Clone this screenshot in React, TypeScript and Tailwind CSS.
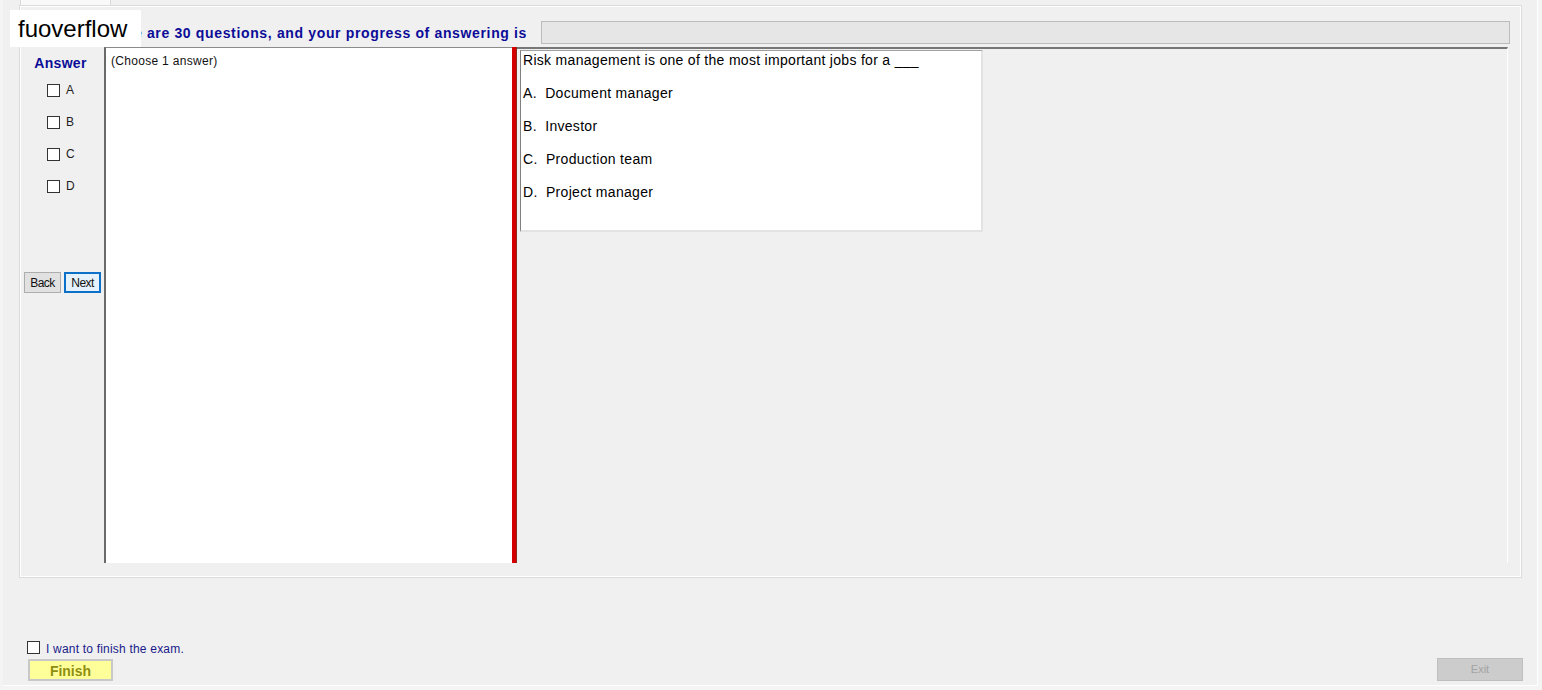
import { ReactNode } from 'react'

const font = { fontFamily: '"Liberation Sans", Arial, sans-serif' }

function Box({ label, top }: { label: string; top: string }) {
  return (
    <div className={`flex items-center ${top}`}>
      <span className="ml-[23px] h-[13px] w-[13px] border border-[#333] bg-white" />
      <span className="ml-[6px] text-[12px] leading-[14px] text-[#222]">{label}</span>
    </div>
  )
}

function Line({ children, first }: { children: ReactNode; first?: boolean }) {
  return (
    <div className={`whitespace-pre pl-[2px] text-[14px] leading-[17px] tracking-[0.3px] text-black ${first ? '' : 'mt-[16px]'}`}>
      {children}
    </div>
  )
}

export default function App() {
  return (
    <div style={font} className="relative h-[690px] w-[1542px] overflow-hidden bg-[#f4f4f4]">
      {/* watermark */}
      <div className="absolute left-[10px] top-[10px] flex h-[37px] w-[131px] items-center bg-white pl-[8px] text-[24px] text-black">
        fuoverflow
      </div>

      <div className="ml-[3px] flex h-[686px] w-[1535px] flex-col border-b border-r border-white bg-[#f0f0f0]">
        {/* tab strip */}
        <div className="flex h-[5px]">
          <div className="ml-[17px] h-[5px] w-[91px] border-x border-[#d9d9d9] bg-[#f9f9f9]" />
        </div>

        {/* tab page */}
        <div className="ml-[16px] flex h-[573px] w-[1503px] flex-col border border-[#dcdcdc] bg-[#f0f0f0] shadow-[inset_1px_1px_0_#ffffff,inset_-1px_-1px_0_#ffffff]">
          {/* header */}
          <div className="flex h-[41px] items-center">
            <div className="ml-[81px] w-[440px] whitespace-nowrap pt-[12px] text-[14px] font-bold leading-[16px] tracking-[0.65px] text-[#0c0c98]">
              There are 30 questions, and your progress of answering is
            </div>
            <div className="mt-[12px] h-[23px] w-[969px] border border-[#bcbcbc] bg-[#e6e6e6]" />
          </div>

          {/* content */}
          <div className="ml-[4px] flex h-[516px] w-[1485px]">
            {/* answer column */}
            <div className="flex w-[80px] flex-col">
              <div className="mt-[8px] pr-[7px] text-center text-[14px] font-bold leading-[16px] tracking-[0.3px] text-[#0c0c98]">Answer</div>
              <Box label="A" top="mt-[12px]" />
              <Box label="B" top="mt-[18px]" />
              <Box label="C" top="mt-[18px]" />
              <Box label="D" top="mt-[18px]" />
              <div className="mt-[79px] flex gap-[3px]">
                <button className="h-[21px] w-[37px] border border-[#adadad] bg-[#e1e1e1] text-[12px] tracking-[-0.6px] text-[#111]">
                  Back
                </button>
                <button className="h-[21px] w-[37px] border-2 border-[#0a70c8] bg-[#e5f1fb] text-[12px] tracking-[-0.6px] text-[#111]">
                  Next
                </button>
              </div>
            </div>

            {/* choose panel */}
            <div className="w-[408px] border-l-2 border-t border-l-[#6a6a6a] border-t-[#8a8a8a] bg-white">
              <div className="pl-[5px] pt-[6px] text-[12px] leading-[14px] tracking-[0.3px] text-[#111]">(Choose 1 answer)</div>
            </div>

            {/* splitter */}
            <div className="w-[5px] bg-[#d40000] shadow-[inset_-1px_0_0_#8a2a1a]" />

            {/* question panel */}
            <div className="w-[991px] border-r border-t-2 border-r-[#ffffff] border-t-[#777777] bg-[#f0f0f0]">
              <div className="ml-[3px] mt-[1px] h-[182px] w-[463px] border-l border-t border-b-2 border-r-2 border-l-[#808080] border-t-[#a0a0a0] border-b-[#e3e3e3] border-r-[#e3e3e3] bg-white pt-[1px]">
                <Line first>Risk management is one of the most important jobs for a ___</Line>
                <Line>A.  Document manager</Line>
                <Line>B.  Investor</Line>
                <Line>C.  Production team</Line>
                <Line>D.  Project manager</Line>
              </div>
            </div>
          </div>
        </div>

        {/* bottom */}
        <div className="flex flex-1 items-end justify-between pb-[4px]">
          <div className="ml-[24px] flex flex-col">
            <div className="flex items-center">
              <span className="h-[13px] w-[13px] border border-[#333] bg-white" />
              <span className="ml-[6px] mt-[3px] text-[12px] leading-[16px] tracking-[0.2px] text-[#1a1a8a]">I want to finish the exam.</span>
            </div>
            <button className="ml-[1px] mt-[2px] h-[22px] w-[85px] border-2 border-[#c8c8c8] bg-[#ffff99] text-[14px] font-bold text-[#8e8e10]">
              Finish
            </button>
          </div>
          <button className="mr-[14px] h-[23px] w-[86px] border border-[#bfbfbf] bg-[#cccccc] text-[11px] text-[#a3a3a3]">
            Exit
          </button>
        </div>
      </div>
    </div>
  )
}
